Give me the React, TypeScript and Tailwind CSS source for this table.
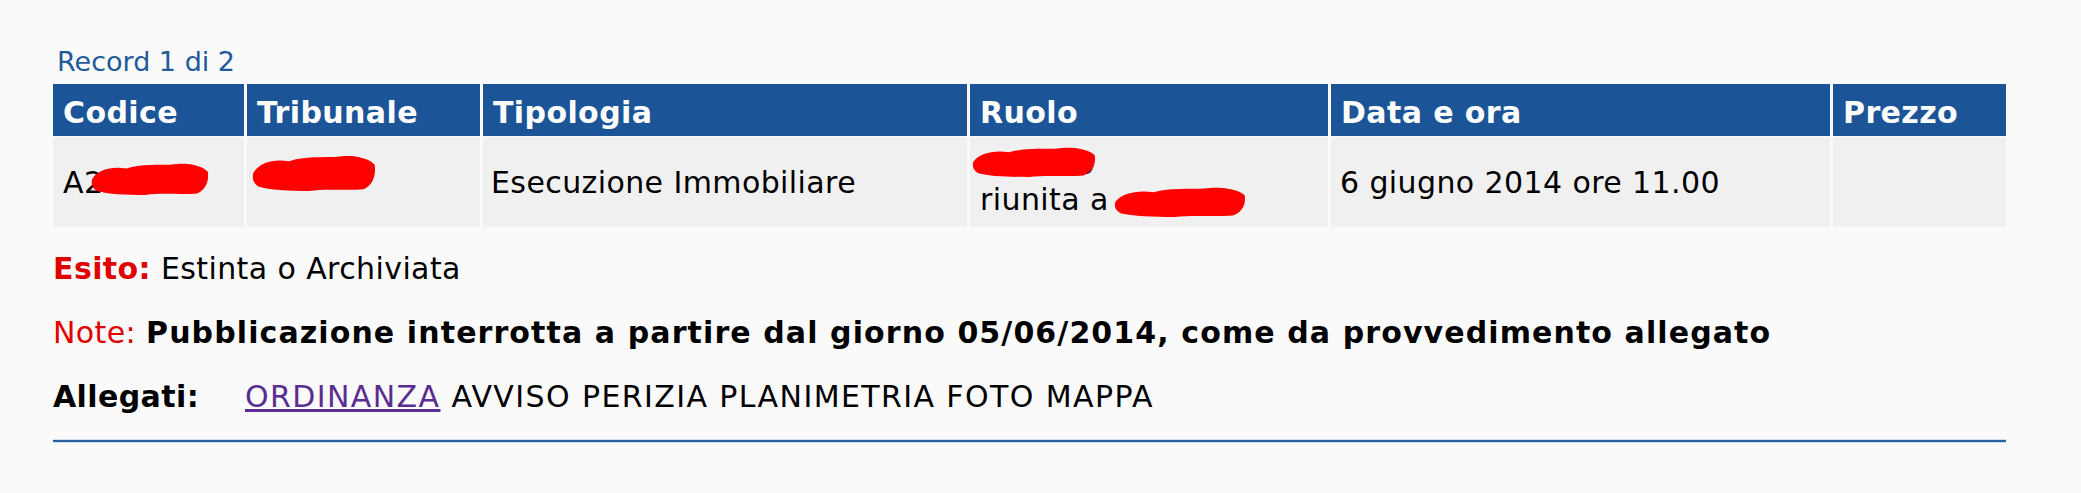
import React from "react";

function Scribble({ w, h, className }: { w: number; h: number; className?: string }) {
  return (
    <svg width={w} height={h} viewBox="0 0 100 40" preserveAspectRatio="none" className={className}>
      <path
        d="M1 20 C6 8 18 4 30 7 C42 1 58 3 70 2 C82 0 94 3 99 11 C100 22 98 33 90 38 C76 40 60 37 46 40 C30 40 14 39 5 35 C1 31 0 26 1 20 Z"
        fill="#ff0000"
      />
      <path d="M60 8 C70 -2 86 0 92 6 L88 14 C80 10 70 12 62 14 Z" fill="#ff0000" />
    </svg>
  );
}

export default function App() {
  const font = { fontFamily: '"DejaVu Sans", Verdana, sans-serif' };
  return (
    <div className="w-[2081px] h-[493px] bg-[#fafafa] text-[30px] text-black tracking-[0.4px]" style={font}>
      <div className="pl-[53px] pt-[40px] w-[2006px]">
        <div className="text-[#1f5a99] leading-[44px] h-[44px] text-[27px] pl-[4px] tracking-[0px]">Record 1 di 2</div>
        <div className="grid grid-cols-[191px_233px_484px_358px_499px_173px] gap-x-[3px] gap-y-[1px]">
          {["Codice", "Tribunale", "Tipologia", "Ruolo", "Data e ora", "Prezzo"].map((h) => (
            <div key={h} className="bg-[#1c5597] text-white font-bold h-[52px] flex items-center pl-[10px] pt-[4px]">
              {h}
            </div>
          ))}
          <div className="bg-[#f0f0f0] h-[90px] flex items-center pl-[10px]">
            <span className="relative">
              A2
              <Scribble w={118} h={32} className="absolute left-[28px] top-[3px]" />
            </span>
          </div>
          <div className="bg-[#f0f0f0] h-[90px] flex items-center pl-[5px]">
            <span className="relative">
              <Scribble w={124} h={36} className="absolute left-[0px] top-[-5px]" />
              <span className="text-black">&nbsp;</span>
            </span>
          </div>
          <div className="bg-[#f0f0f0] h-[90px] flex items-center pl-[8px]">Esecuzione Immobiliare</div>
          <div className="bg-[#f0f0f0] h-[90px] flex flex-col justify-center pl-[10px] leading-[36px]">
            <span className="relative">
              <span className="pl-[96px] text-black">0</span>
              <Scribble w={124} h={30} className="absolute left-[-8px] top-[1px]" />
            </span>
            <span className="relative">
              riunita a
              <Scribble w={132} h={30} className="absolute left-[134px] top-[5px]" />
            </span>
          </div>
          <div className="bg-[#f0f0f0] h-[90px] flex items-center pl-[9px]">6 giugno 2014 ore 11.00</div>
          <div className="bg-[#f0f0f0] h-[90px]"></div>
        </div>
        <div className="mt-[22px] leading-[40px]">
          <span className="text-[#e00000] font-bold">Esito:</span> Estinta o Archiviata
        </div>
        <div className="mt-[24px] leading-[40px]">
          <span className="text-[#e00000]">Note:</span>{" "}
          <span className="font-bold tracking-[1.1px]">Pubblicazione interrotta a partire dal giorno 05/06/2014, come da provvedimento allegato</span>
        </div>
        <div className="mt-[24px] leading-[40px] flex">
          <span className="w-[192px] font-bold">Allegati:</span>
          <span className="tracking-[1.4px]">
            <span className="text-[#5a2d91] underline">ORDINANZA</span> AVVISO PERIZIA PLANIMETRIA FOTO MAPPA
          </span>
        </div>
        <div className="mt-[22px] h-[4px] bg-[#2b5f9e] border-y border-[#cfe0f0]"></div>
      </div>
    </div>
  );
}
